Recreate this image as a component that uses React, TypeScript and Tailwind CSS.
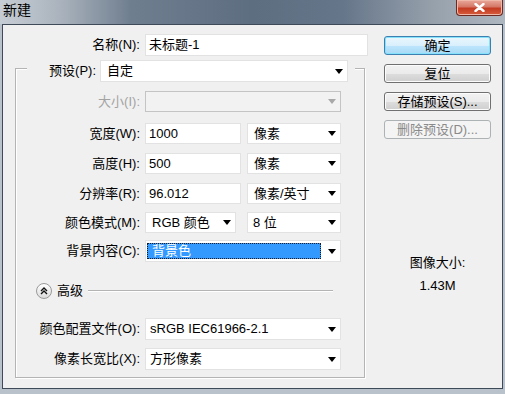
import React from "react";

const Arrow = ({ disabled }: { disabled?: boolean }) => (
  <svg width="8" height="5" viewBox="0 0 8 5" className="shrink-0">
    <path d="M0 0h8L4 5z" fill={disabled ? "#a8a8a8" : "#000"} />
  </svg>
);

const Field = ({ width, text }: { width: string; text: string }) => (
  <div className={`${width} h-full bg-white border border-[#e2e2e2] flex items-center pl-[3px] text-black`}>
    {text}
  </div>
);

const Combo = ({
  width,
  text,
  pad = "pl-[6px]",
  disabled,
  selected,
}: {
  width: string;
  text?: string;
  pad?: string;
  disabled?: boolean;
  selected?: boolean;
}) => (
  <div
    className={`${width} h-full flex items-center border ${
      disabled ? "bg-[#f2f2f2] border-[#c4c4c4]" : "bg-white border-[#e2e2e2]"
    }`}
  >
    {selected ? (
      <div className="flex-1 h-full py-[2px] pl-[1px]">
        <div className="h-full bg-[#3399ff] border border-dotted border-[#1a1a1a] text-white flex items-center pl-[4px]">
          {text}
        </div>
      </div>
    ) : (
      <div className={`flex-1 ${pad} text-black`}>{text}</div>
    )}
    <div className="w-[19px] flex justify-center pl-[2px]">
      <Arrow disabled={disabled} />
    </div>
  </div>
);

const Row = ({
  label,
  mt,
  h = "h-[21px]",
  disabled,
  children,
}: {
  label: string;
  mt: string;
  h?: string;
  disabled?: boolean;
  children: React.ReactNode;
}) => (
  <div className={`flex items-center ${mt} ${h}`}>
    <div className={`w-[124px] text-right ${disabled ? "text-[#a3a3a3]" : "text-black"}`}>{label}</div>
    <div className="ml-[5px] h-full flex gap-[6px]">{children}</div>
  </div>
);

const Button = ({
  children,
  kind = "normal",
  mt,
}: {
  children: React.ReactNode;
  kind?: "default" | "normal" | "disabled";
  mt: string;
}) => {
  const look =
    kind === "default"
      ? "border-[#3c7fb1] bg-[linear-gradient(#eaf6fd_0%,#d9f0fc_50%,#bee6fd_51%,#a7d9f5_100%)] shadow-[inset_0_0_0_1px_#86e2fb] text-black"
      : kind === "disabled"
      ? "border-[#adb2b5] bg-[#f4f4f4] text-[#8a8a8a]"
      : "border-[#707070] bg-[linear-gradient(#f2f2f2_0%,#ebebeb_50%,#dddddd_51%,#cfcfcf_100%)] shadow-[inset_0_0_0_1px_#fcfcfc] text-black";
  return (
    <div className={`${mt} h-[19px] w-[107px] rounded-[3px] border flex items-center justify-center ${look}`}>
      {children}
    </div>
  );
};

export default function App() {
  return (
    <div className="w-[505px] h-[394px] bg-[#b9c1ca] flex flex-col px-[2px] pb-[5px] text-[13px] leading-[16px] font-['Liberation_Sans','Noto_Sans_CJK_SC',sans-serif] overflow-hidden">
      {/* title bar */}
      <div className="-mx-[2px] h-[24px] flex items-start justify-between bg-[linear-gradient(90deg,#c7cdd4_0%,#aab3bd_12%,#6f7e8f_26%,#5e6e81_50%,#66768a_68%,#97a1ac_86%,#aeb6bf_100%)]">
        <div className="pl-[3px] pt-[2px] text-[14px] leading-[16px] text-black">新建</div>
        <div className="mr-[2px] w-[47px] h-[16px] rounded-b-[4px] border border-t-0 border-[#6d2a22] bg-[linear-gradient(#e9a99b_0%,#d47867_45%,#c43b22_55%,#d55c3c_100%)] shadow-[inset_0_0_0_1px_#f0b8a8] flex items-center justify-center">
          <svg width="11" height="9" viewBox="0 0 11 9">
            <path d="M1.5 1l8 7M9.5 1l-8 7" stroke="#fff" strokeWidth="2.4" strokeLinecap="round" />
          </svg>
        </div>
      </div>

      {/* client area */}
      <div className="flex-1 border border-[#3e4a57] bg-[#f0f0f0] flex">
        <div className="w-[365px] flex flex-col">
          <div className="mt-[9px] h-[22px] flex items-center">
            <div className="w-[137px] text-right text-black">名称(N):</div>
            <div className="ml-[5px] h-full">
              <Field width="w-[223px]" text="未标题-1" />
            </div>
          </div>

          <div className="mt-[12px] ml-[12px] w-[350px] border border-[#b4b4b4] shadow-[inset_1px_1px_0_#fff,1px_1px_0_#fff] pb-[7px] flex flex-col">
            <div className="-mt-[9px] ml-[11px] h-[22px] w-[328px] flex items-center bg-[#f0f0f0] pr-[7px]">
              <div className="w-[69px] text-right text-black">预设(P):</div>
              <div className="ml-[4px] h-full">
                <Combo width="w-[248px]" text="自定" />
              </div>
            </div>

            <Row label="大小(I):" mt="mt-[9px]" disabled>
              <Combo width="w-[196px]" disabled />
            </Row>
            <Row label="宽度(W):" mt="mt-[11px]">
              <Field width="w-[96px]" text="1000" />
              <Combo width="w-[94px]" text="像素" />
            </Row>
            <Row label="高度(H):" mt="mt-[9px]">
              <Field width="w-[96px]" text="500" />
              <Combo width="w-[94px]" text="像素" />
            </Row>
            <Row label="分辨率(R):" mt="mt-[9px]">
              <Field width="w-[96px]" text="96.012" />
              <Combo width="w-[94px]" text="像素/英寸" />
            </Row>
            <Row label="颜色模式(M):" mt="mt-[8px]">
              <Combo width="w-[91px]" text="RGB 颜色" />
              <div className="ml-[5px] h-full">
                <Combo width="w-[94px]" text="8 位" pad="pl-[5px]" />
              </div>
            </Row>
            <Row label="背景内容(C):" mt="mt-[7px]" h="h-[22px]">
              <Combo width="w-[196px]" text="背景色" selected />
            </Row>

            <div className="mt-[21px] h-[16px] flex items-center">
              <div className="ml-[20px] w-[16px] h-[16px] rounded-full border border-[#9a9a9a] bg-[linear-gradient(#ffffff,#dcdcdc)] flex items-center justify-center">
                <svg width="8" height="8" viewBox="0 0 8 8">
                  <path d="M1 4l3-3 3 3M1 7l3-3 3 3" stroke="#111" strokeWidth="1.4" fill="none" />
                </svg>
              </div>
              <div className="ml-[5px] text-black">高级</div>
              <div className="ml-[5px] mr-[31px] flex-1 h-[2px] border-t border-[#b4b4b4] border-b border-b-white" />
            </div>

            <Row label="颜色配置文件(O):" mt="mt-[19px]" h="h-[22px]">
              <Combo width="w-[196px]" text="sRGB IEC61966-2.1" pad="pl-[4px]" />
            </Row>
            <Row label="像素长宽比(X):" mt="mt-[8px]" h="h-[22px]">
              <Combo width="w-[196px]" text="方形像素" pad="pl-[4px]" />
            </Row>
          </div>
        </div>

        <div className="ml-[16px] w-[107px] flex flex-col items-center">
          <Button kind="default" mt="mt-[11px]">确定</Button>
          <Button mt="mt-[9px]">复位</Button>
          <Button mt="mt-[9px]">存储预设(S)...</Button>
          <Button kind="disabled" mt="mt-[9px]">删除预设(D)...</Button>
          <div className="mt-[116px] text-black">图像大小:</div>
          <div className="mt-[7px] text-black">1.43M</div>
        </div>
      </div>
    </div>
  );
}
